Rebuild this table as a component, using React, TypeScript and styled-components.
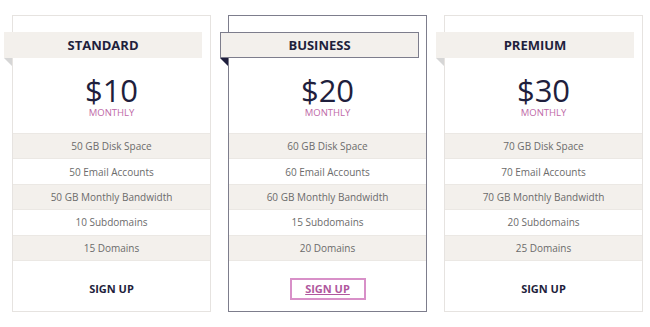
import styled, { createGlobalStyle, css } from 'styled-components';

const GlobalStyle = createGlobalStyle`
  html, body {
    margin: 0;
    padding: 0;
    background: #ffffff;
    font-family: 'Open Sans', 'Noto Sans', sans-serif;
  }
`;

const PLANS = [
  {
    name: 'STANDARD',
    price: '$10',
    features: ['50 GB Disk Space', '50 Email Accounts', '50 GB Monthly Bandwidth', '10 Subdomains', '15 Domains'],
    featured: false,
  },
  {
    name: 'BUSINESS',
    price: '$20',
    features: ['60 GB Disk Space', '60 Email Accounts', '60 GB Monthly Bandwidth', '15 Subdomains', '20 Domains'],
    featured: true,
  },
  {
    name: 'PREMIUM',
    price: '$30',
    features: ['70 GB Disk Space', '70 Email Accounts', '70 GB Monthly Bandwidth', '20 Subdomains', '25 Domains'],
    featured: false,
  },
];

const Table = styled.div`
  display: flex;
  gap: 17px;
  padding: 15px 0 0 12px;
`;

const Card = styled.div<{ $featured: boolean }>`
  width: 199px;
  height: 297px;
  box-sizing: border-box;
  border: 1px solid ${(p) => (p.$featured ? '#7d7d8c' : '#e6e3e0')};
  padding-top: 16px;
  display: flex;
  flex-direction: column;
  background: #fff;
`;

const Ribbon = styled.div<{ $featured: boolean }>`
  position: relative;
  margin-left: -9px;
  width: ${(p) => (p.$featured ? '199px' : '198px')};
  height: 26px;
  box-sizing: border-box;
  background: #f3f0ec;
  border: ${(p) => (p.$featured ? '1px solid #7d7d8c' : 'none')};
  display: flex;
  align-items: center;
  justify-content: center;
  font-size: 13px;
  font-weight: 700;
  color: #1f1f3d;

  &::after {
    content: '';
    position: absolute;
    left: ${(p) => (p.$featured ? '-1px' : '0')};
    top: ${(p) => (p.$featured ? '25px' : '26px')};
    width: 0;
    height: 0;
    border-top: 8px solid ${(p) => (p.$featured ? '#1f1f3d' : '#d6d6d6')};
    border-left: 8px solid transparent;
  }
`;

const PriceBlock = styled.div`
  height: 75px;
  display: flex;
  flex-direction: column;
  align-items: center;
  justify-content: center;
  padding-top: 2px;
  box-sizing: border-box;
`;

const Price = styled.div`
  font-size: 31px;
  line-height: 30px;
  color: #1f1f3d;
`;

const Period = styled.div`
  margin-top: 3px;
  font-size: 9.5px;
  line-height: 10px;
  color: #c06aa8;
`;

const Features = styled.div`
  display: flex;
  flex-direction: column;
  border-bottom: 1px solid #ebe8e4;
`;

const Feature = styled.div<{ $alt: boolean }>`
  height: 25.4px;
  box-sizing: border-box;
  border-top: 1px solid #ebe8e4;
  background: ${(p) => (p.$alt ? '#f3f0ec' : '#ffffff')};
  display: flex;
  align-items: center;
  justify-content: center;
  font-size: 10px;
  color: #6b6b6b;
`;

const Footer = styled.div`
  flex: 1;
  display: flex;
  align-items: center;
  justify-content: center;
  padding-top: 6px;
`;

const SignUp = styled.a<{ $featured: boolean }>`
  font-size: 11px;
  font-weight: 700;
  color: #1f1f3d;
  text-decoration: none;
  display: flex;
  align-items: center;
  justify-content: center;
  ${(p) =>
    p.$featured &&
    css`
      width: 76px;
      height: 22px;
      box-sizing: border-box;
      border: 2px solid #d890c8;
      color: #b0589e;
      text-decoration: underline;
    `}
`;

export default function App() {
  return (
    <>
      <GlobalStyle />
      <Table>
        {PLANS.map((plan) => (
          <Card key={plan.name} $featured={plan.featured}>
            <Ribbon $featured={plan.featured}>{plan.name}</Ribbon>
            <PriceBlock>
              <Price>{plan.price}</Price>
              <Period>MONTHLY</Period>
            </PriceBlock>
            <Features>
              {plan.features.map((f, i) => (
                <Feature key={f} $alt={i % 2 === 0}>
                  {f}
                </Feature>
              ))}
            </Features>
            <Footer>
              <SignUp href="#" $featured={plan.featured}>
                SIGN UP
              </SignUp>
            </Footer>
          </Card>
        ))}
      </Table>
    </>
  );
}
